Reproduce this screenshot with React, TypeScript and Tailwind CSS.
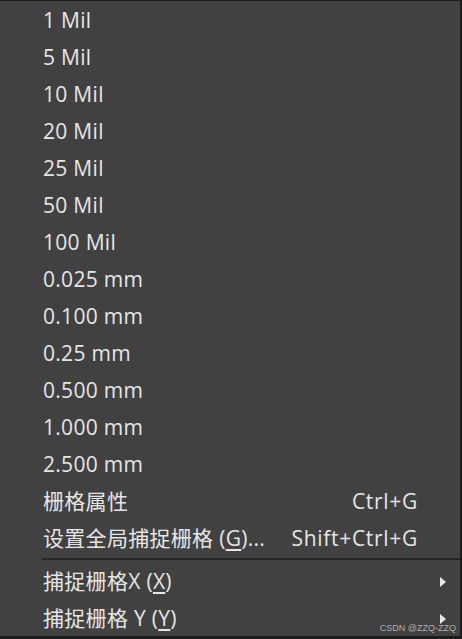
import React from "react";

const sizes = [
  "1 Mil",
  "5 Mil",
  "10 Mil",
  "20 Mil",
  "25 Mil",
  "50 Mil",
  "100 Mil",
  "0.025 mm",
  "0.100 mm",
  "0.25 mm",
  "0.500 mm",
  "1.000 mm",
  "2.500 mm",
];

function Row({ children, shortcut, sub }: { children: React.ReactNode; shortcut?: string; sub?: boolean }) {
  return (
    <div className="h-[37px] flex items-center pl-[43px] pr-[42px] pt-[2px]">
      <span className="flex-1 whitespace-nowrap">{children}</span>
      {shortcut && <span className="whitespace-nowrap tracking-[0.7px]">{shortcut}</span>}
      {sub && (
        <span className="mr-[-28px] w-0 h-0 border-y-[5px] border-y-transparent border-l-[6px] border-l-[#e8e8e8]" />
      )}
    </div>
  );
}

export default function App() {
  return (
    <div
      className="w-[462px] h-[639px] bg-[#414141] text-[#e6e6e6] text-[21px] tracking-[0.3px] border-t border-r-2 border-b-[3px] border-[#1c1c1c] relative overflow-hidden"
      style={{ fontFamily: '"Open Sans", "Noto Sans CJK SC", sans-serif' }}
    >
      {sizes.map((s) => (
        <Row key={s}>{s}</Row>
      ))}
      <Row shortcut="Ctrl+G">栅格属性</Row>
      <Row shortcut="Shift+Ctrl+G">
        设置全局捕捉栅格 (<span className="underline underline-offset-[3px]">G</span>)...
      </Row>
      <div className="py-[2px] pl-[42px]">
        <div className="h-[2px] bg-[#262626]" />
      </div>
      <Row sub>
        捕捉栅格X (<span className="underline underline-offset-[3px]">X</span>)
      </Row>
      <Row sub>
        捕捉栅格 Y (<span className="underline underline-offset-[3px]">Y</span>)
      </Row>
      <div
        className="absolute right-[4px] bottom-[3px] text-[9px] tracking-normal text-[#b0b0b0] leading-none"
        style={{ fontFamily: '"Liberation Sans", sans-serif' }}
      >
        CSDN @ZZQ-ZZQ
      </div>
    </div>
  );
}
